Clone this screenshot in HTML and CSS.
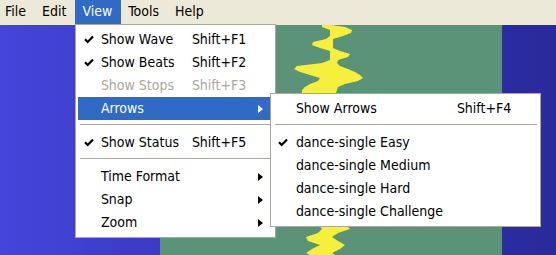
FILE: index.html
```html
<!DOCTYPE html>
<html>
<head>
<meta charset="utf-8">
<link rel="stylesheet" href="styles.css">
</head>
<body>
<div class="app">
  <div class="menubar">
    <div class="mb-item">File</div>
    <div class="mb-item">Edit</div>
    <div class="mb-item mb-open">View
      <div class="menu view-menu">
        <div class="mi"><span class="chk"><svg width="10" height="9" viewBox="0 0 10 9"><path d="M1 4.2 L3.7 7 L9 1.5" fill="none" stroke="#000" stroke-width="2.2"/></svg></span><span>Show Wave</span><span>Shift+F1</span><span></span></div>
        <div class="mi"><span class="chk"><svg width="10" height="9" viewBox="0 0 10 9"><path d="M1 4.2 L3.7 7 L9 1.5" fill="none" stroke="#000" stroke-width="2.2"/></svg></span><span>Show Beats</span><span>Shift+F2</span><span></span></div>
        <div class="mi disabled"><span></span><span>Show Stops</span><span>Shift+F3</span><span></span></div>
        <div class="mi active"><span></span><span>Arrows</span><span></span><span class="tri"></span>
          <div class="menu sub-menu">
            <div class="mi sub"><span></span><span>Show Arrows</span><span>Shift+F4</span><span></span></div>
            <div class="sep sub-sep"></div>
            <div class="mi sub"><span class="chk"><svg width="10" height="9" viewBox="0 0 10 9"><path d="M1 4.2 L3.7 7 L9 1.5" fill="none" stroke="#000" stroke-width="2.2"/></svg></span><span>dance-single Easy</span><span></span><span></span></div>
            <div class="mi sub"><span></span><span>dance-single Medium</span><span></span><span></span></div>
            <div class="mi sub"><span></span><span>dance-single Hard</span><span></span><span></span></div>
            <div class="mi sub"><span></span><span>dance-single Challenge</span><span></span><span></span></div>
          </div>
        </div>
        <div class="sep"></div>
        <div class="mi"><span class="chk"><svg width="10" height="9" viewBox="0 0 10 9"><path d="M1 4.2 L3.7 7 L9 1.5" fill="none" stroke="#000" stroke-width="2.2"/></svg></span><span>Show Status</span><span>Shift+F5</span><span></span></div>
        <div class="sep"></div>
        <div class="mi"><span></span><span>Time Format</span><span></span><span class="tri"></span></div>
        <div class="mi"><span></span><span>Snap</span><span></span><span class="tri"></span></div>
        <div class="mi"><span></span><span>Zoom</span><span></span><span class="tri"></span></div>
      </div>
    </div>
    <div class="mb-item">Tools</div>
    <div class="mb-item">Help</div>
  </div>
  <div class="workspace">
    <div class="ws-left"></div>
    <div class="ws-panel">
      <svg class="wave" width="342" height="230" viewBox="160 25 342 230">
        <polygon fill="#f6f03c" points="331,25 345,27 352,30 351,33 343,36 333,39 333,48 340,51 350,54 348,57 338,60 337,63 340,66 348,69 355,72 360,75 363,78 358,81 345,84 338,87 336,93 302,93 302,90 305,87 310,84 318,81 320,78 310,75 300,72 294,69 297,66 322,63 330,60 330,51 320,48 312,45 313,42 326,39 330,36 330,30 322,27 322,25"/>
        <polygon fill="#f6f03c" points="318,224 345,224 350,229 338,233 332,237 338,241 345,245 340,249 332,253 335,255 310,255 306,253 312,249 320,245 308,241 306,237 318,233 322,229"/>
      </svg>
    </div>
    <div class="ws-right"></div>
  </div>
</div>
</body>
</html>
```
FILE: styles.css
```css
html, body {
  margin: 0;
  padding: 0;
}
body {
  width: 556px;
  height: 255px;
  overflow: hidden;
  font-family: "DejaVu Sans Condensed", "DejaVu Sans", sans-serif;
  font-stretch: condensed;
  font-size: 14px;
  color: #000;
}
.app {
  display: flex;
  flex-direction: column;
  height: 255px;
}
.menubar {
  display: flex;
  height: 25px;
  background: #ece9d8;
}
.mb-item {
  position: relative;
  height: 24px;
  line-height: 23px;
  padding: 0 8.5px 0 7.5px;
}
.mb-item:first-child {
  padding-left: 5px;
}
.mb-open {
  background: #316ac5;
  color: #fff;
}
.menu {
  position: absolute;
  background: #fff;
  color: #000;
  border: 1px solid #aca899;
  box-sizing: border-box;
  z-index: 10;
}
.view-menu {
  left: 0;
  top: 24px;
  width: 201px;
  padding: 3px 2px;
}
.mi {
  position: relative;
  display: grid;
  grid-template-columns: 23px 91px 1fr 15px;
  align-items: center;
  height: 23px;
  line-height: 23px;
  white-space: nowrap;
}
.mi.sub {
  grid-template-columns: 23px 161px 1fr 15px;
}
.chk {
  display: flex;
  align-items: center;
  padding-left: 6px;
  height: 23px;
}
.sub .chk {
  padding-left: 5px;
}
.disabled {
  color: #aca899;
}
.active {
  background: #316ac5;
  color: #fff;
}
.tri {
  width: 0;
  height: 0;
  border-left: 5px solid #000;
  border-top: 4px solid transparent;
  border-bottom: 4px solid transparent;
}
.active .tri {
  border-left-color: #fff;
}
.sep {
  height: 1px;
  background: #aca899;
  margin: 4px 2px 6px 2px;
}
.sub-sep {
  margin: 4px 1px 6px 2px;
}
.sub-menu {
  left: calc(100% - 3px);
  top: -4px;
  width: 271px;
  padding: 3px 2px;
}
.workspace {
  display: flex;
  flex: 1;
  background: linear-gradient(to right, #4545dc 0%, #3838c0 35%, #2d2da4 85%, #2a2a9c 100%);
}
.ws-left {
  width: 160px;
}
.ws-panel {
  width: 342px;
  background: #5a9377;
  overflow: hidden;
}
.wave {
  display: block;
}
.ws-right {
  flex: 1;
}
```
